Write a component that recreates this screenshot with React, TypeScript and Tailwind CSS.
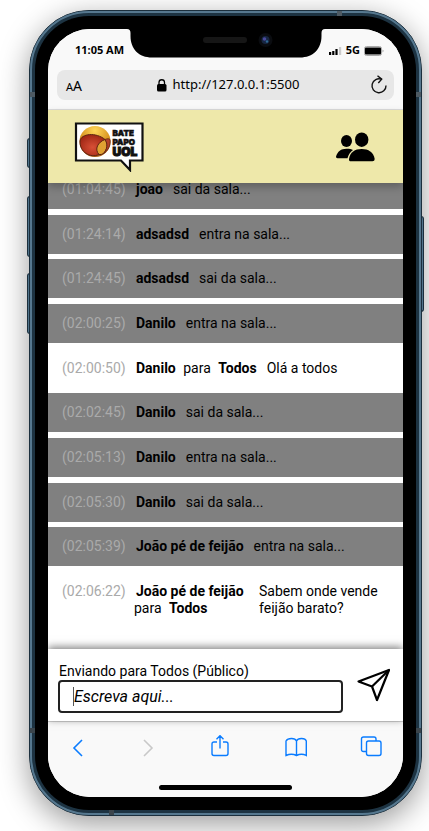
import React from "react";

type Message = { time: string; from: string; text: string; to?: string };

const messages: Message[] = [
  { time: "(01:04:45)", from: "joao", text: "sai da sala..." },
  { time: "(01:24:14)", from: "adsadsd", text: "entra na sala..." },
  { time: "(01:24:45)", from: "adsadsd", text: "sai da sala..." },
  { time: "(02:00:25)", from: "Danilo", text: "entra na sala..." },
  { time: "(02:00:50)", from: "Danilo", to: "Todos", text: "Olá a todos" },
  { time: "(02:02:45)", from: "Danilo", text: "sai da sala..." },
  { time: "(02:05:13)", from: "Danilo", text: "entra na sala..." },
  { time: "(02:05:30)", from: "Danilo", text: "sai da sala..." },
  { time: "(02:05:39)", from: "João pé de feijão", text: "entra na sala..." },
  { time: "(02:06:22)", from: "João pé de feijão", to: "Todos", text: "Sabem onde vende feijão barato?" },
];

function Notch() {
  return (
    <svg className="absolute top-0 left-1/2 -ml-[100px]" width="200" height="29" viewBox="0 0 200 29" aria-hidden="true">
      <path d="M1 0H199Q195.500 0 195.500 4V7C195.500 20 187 28.500 174 28.500H26C13 28.500 4.500 20 4.500 7V4Q4.500 0 1 0Z" fill="#000" />
      <rect x="77" y="8" width="44" height="6" rx="3" fill="#161616" />
      <circle cx="139.500" cy="11" r="7" fill="#0a0c10" />
      <circle cx="139.500" cy="11" r="4" fill="#172642" />
      <circle cx="138.500" cy="10" r="1.800" fill="#4a4a9c" />
      <circle cx="141" cy="12.500" r="1.200" fill="#2f6a94" />
    </svg>
  );
}

function StatusBar() {
  return (
    <div className="flex h-[41px] items-center justify-between pt-[2px] pr-[19px] pl-[27px] text-[11px] font-bold">
      <span>11:05 AM</span>
      <div className="flex items-center gap-1">
        <svg width="13" height="8" viewBox="0 0 13 8" aria-hidden="true">
          <path d="M0 5h2.200v3H0zM3.200 4h2.200v4H3.200zM6.400 2h2.200v6H6.400z" fill="#000" />
          <path d="M10 0h2.200v8H10z" fill="#ccc" />
        </svg>
        <span>5G</span>
        <svg width="20" height="10" viewBox="0 0 20 10" aria-hidden="true">
          <rect x="0.500" y="0.500" width="17" height="9" rx="2" fill="none" stroke="#aaa" />
          <rect x="1" y="1.500" width="16" height="7" rx="1" fill="#000" />
          <path d="M18.500 3.500v3l1-1v-1z" fill="#aaa" />
        </svg>
      </div>
    </div>
  );
}

function AddressBar() {
  return (
    <div className="mx-[9px] mb-[9px] flex h-[30px] items-center justify-between rounded-lg bg-[#e7e7e7] pr-[6px] pl-[9px]">
      <button type="button" aria-label="Tamanho do texto" className="w-5 text-left leading-none">
        <span className="text-[11px]">A</span>
        <span className="text-[14px]">A</span>
      </button>
      <div className="flex items-center gap-[6px] text-[13px]">
        <svg width="10" height="13" viewBox="0 0 10 13" aria-hidden="true">
          <rect y="5" width="9.500" height="7.500" rx="1.500" />
          <path d="M2 6V3.500a2.700 2.700 0 0 1 5.500 0V6" fill="none" stroke="#000" strokeWidth="1.300" />
        </svg>
        <span>http://127.0.0.1:5500</span>
      </div>
      <button type="button" aria-label="Recarregar">
        <svg width="18" height="20" viewBox="0 0 18 20" fill="none" stroke="#111" strokeWidth="1.400" aria-hidden="true">
          <path d="M16 10.500A7 7 0 1 1 11.500 4.200" />
          <path d="M7.500 0.800l4.200 3.400-3.400 3.800" />
        </svg>
      </button>
    </div>
  );
}

function Logo() {
  return (
    <svg width="70" height="50" viewBox="0 0 70 50" role="img" aria-label="Bate Papo UOL">
      <defs>
        <radialGradient id="ball" cx="50%" cy="15%" r="80%">
          <stop offset="0" stopColor="#ffd75a" />
          <stop offset="0.600" stopColor="#d99522" />
          <stop offset="1" stopColor="#a85d12" />
        </radialGradient>
        <radialGradient id="core" cx="50%" cy="60%" r="70%">
          <stop offset="0" stopColor="#d84f36" />
          <stop offset="1" stopColor="#96200f" />
        </radialGradient>
      </defs>
      <path d="M2 1.500H68.500V38.500H56V48L47 38.500H2Z" fill="#fff" stroke="#111" strokeWidth="2.200" />
      <circle cx="21" cy="19.500" r="15.500" fill="url(#ball)" />
      <path d="M6 19C7 11.500 22 10 31 17.500C25 21 23.500 26 25 32.500C16 36.500 5.500 30 6 19Z" fill="url(#core)" stroke="#5d2412" />
      <path d="M31 17.500C34 22 33.500 27 29.500 31.500Q27 33 25 32.500C20 27 24 20 31 17.500Z" fill="#dfa032" stroke="#5d2412" />
      <path d="M31 17.500C33 16.500 35 16.500 36 17.500C37 23 34 29 29.500 31.500C33.500 27 34 22 31 17.500Z" fill="#b4402a" stroke="#5d2412" strokeWidth="0.800" />
      <g fill="#111" stroke="#111" fontFamily="Inter, sans-serif" fontWeight="900">
        <text x="38.500" y="13.500" fontSize="8" strokeWidth="0.600">BATE</text>
        <text x="38.500" y="22.500" fontSize="8" strokeWidth="0.600">PAPO</text>
        <text x="38.500" y="34" fontSize="12" strokeWidth="1">UOL</text>
      </g>
    </svg>
  );
}

function PeopleIcon() {
  return (
    <svg width="40" height="32" viewBox="0 0 40 32" fill="#000" aria-hidden="true">
      <ellipse cx="11.500" cy="10" rx="5.500" ry="6" />
      <ellipse cx="26.700" cy="8.700" rx="6.700" ry="7.200" />
      <path d="M14 28C15 21 20 18 26.700 18S38.500 21 39.700 28Q39.700 30.300 37.500 30.300H16Q13.700 30.300 14 28Z" />
      <path d="M11.500 17.800C14.500 17.800 16.500 18.200 18 19C15 21 13.300 24 12.500 27.300H2.500Q0.800 27.300 1 25.500C2.500 20.500 6 17.800 11.500 17.800Z" />
    </svg>
  );
}

function MessageRow({ message }: { message: Message }) {
  return (
    <li
      className={`flex min-h-[39px] shrink-0 items-start px-[14px] py-[11px] text-[14px] leading-[17px] ${
        message.to ? "bg-white" : "bg-[#808080]"
      }`}
    >
      <time className="mr-[6px] w-[66px] shrink-0 text-[#aaaaaa]">{message.time}</time>
      <p className={message.to && message.text.length > 20 ? "w-[119px] shrink-0" : "shrink-0"}>
        <b className="mr-[4px] ml-[2px] whitespace-nowrap">{message.from}</b>
        {message.to && (
          <>
            {" "}
            para <b className="mx-[4px]">{message.to}</b>
          </>
        )}
      </p>
      <p className="ml-[6px]">{message.text}</p>
    </li>
  );
}

function Composer() {
  return (
    <form
      className="relative z-10 flex h-[72px] shrink-0 items-center justify-between bg-white pr-[12px] pb-[2px] pl-[10px] shadow-[0_-2px_8px_rgba(0,0,0,0.5)]"
      onSubmit={(e) => e.preventDefault()}
    >
      <div className="min-w-0 flex-1">
        <label htmlFor="mensagem" className="block pt-[8px] pl-px text-[14px] leading-[17px]">
          Enviando para Todos (Público)
        </label>
        <div className="flex h-[33px] items-center rounded-[4px] border-2 border-[#222] pl-[13px]">
          <span className="h-[19px] w-px bg-[#555]" />
          <input
            id="mensagem"
            placeholder="Escreva aqui..."
            className="w-full min-w-0 bg-transparent text-[16px] italic outline-none placeholder:text-black"
          />
        </div>
      </div>
      <button type="submit" aria-label="Enviar" className="mt-[2px] ml-[14px]">
        <svg width="34" height="34" viewBox="0 0 34 34" fill="none" stroke="#000" strokeWidth="2.200" strokeLinejoin="round" aria-hidden="true">
          <path d="M1.500 13.500L32 2L20 32L15 18.500Z" />
          <path d="M15 18.500L32 2" />
        </svg>
      </button>
    </form>
  );
}

function BrowserToolbar() {
  return (
    <nav className="h-[76px] shrink-0 border-t border-[#d2d2d2] bg-[#f9f9f9]">
      <div className="flex h-[50px] items-center justify-between px-[21px] text-[#0a7cff]">
        <button type="button" aria-label="Voltar">
          <svg width="18" height="24" viewBox="0 0 18 24" fill="none" stroke="currentColor" strokeWidth="1.600"><path d="M13 5L5 13L13 21" /></svg>
        </button>
        <button type="button" aria-label="Avançar" className="text-[#c8c8c8]">
          <svg width="18" height="24" viewBox="0 0 18 24" fill="none" stroke="currentColor" strokeWidth="1.600"><path d="M4 5L12 13L4 21" /></svg>
        </button>
        <button type="button" aria-label="Compartilhar">
          <svg width="20" height="24" viewBox="0 0 20 24" fill="none" stroke="currentColor" strokeWidth="1.400"><path d="M6 7H3Q1 7 1 9V18.500Q1 20.500 3 20.500H15Q17 20.500 17 18.500V9Q17 7 15 7H12M9 13.500V1M5.500 4.200L9 0.700L12.500 4.200" /></svg>
        </button>
        <button type="button" aria-label="Favoritos">
          <svg width="24" height="24" viewBox="0 0 24 24" fill="none" stroke="currentColor" strokeWidth="1.400"><path d="M13.500 6Q12.500 3.500 8.500 3.500Q4.500 3.500 3 6V20.500Q8.500 18 13.500 20.500Q18.500 18 23.300 20.500V6Q22.500 3.500 18.500 3.500Q14.500 3.500 13.500 6V20.500" /></svg>
        </button>
        <button type="button" aria-label="Abas">
          <svg width="22" height="24" viewBox="0 0 22 24" fill="none" stroke="currentColor" strokeWidth="1.400"><rect x="6.500" y="6" width="14.500" height="14.500" rx="2" /><path d="M6.500 16.500H3.500Q1.500 16.500 1.500 14.500V4Q1.500 2 3.500 2H14Q16 2 16 4V6" /></svg>
        </button>
      </div>
      <div className="mx-auto mt-[13px] h-[5px] w-[133px] rounded-full bg-black" />
    </nav>
  );
}

function FrameDetails() {
  return (
    <div aria-hidden="true">
      <span className="absolute top-[127px] -left-[3px] h-[30px] w-[3px] rounded-l-sm border border-[#1b2f3d] bg-[#50738a]" />
      <span className="absolute top-[185px] -left-[3px] h-[61px] w-[3px] rounded-l-sm border border-[#1b2f3d] bg-[#50738a]" />
      <span className="absolute top-[262px] -left-[3px] h-[61px] w-[3px] rounded-l-sm border border-[#1b2f3d] bg-[#50738a]" />
      <span className="absolute top-[205px] -right-[3px] h-[96px] w-[3px] rounded-r-sm border border-[#1b2f3d] bg-[#50738a]" />
      <span className="absolute top-[81px] left-0 h-[5px] w-[5px] bg-[#4e5a63]" />
      <span className="absolute top-[81px] right-0 h-[5px] w-[5px] bg-[#4e5a63]" />
      <span className="absolute bottom-[82px] left-0 h-[5px] w-[5px] bg-[#3b454c]" />
      <span className="absolute right-0 bottom-[82px] h-[5px] w-[5px] bg-[#3b454c]" />
      <span className="absolute top-0 right-[79px] h-[5px] w-[5px] bg-[#4e5a63]" />
      <span className="absolute bottom-0 left-[79px] h-[5px] w-[5px] bg-[#3b454c]" />
    </div>
  );
}

export default function App() {
  return (
    <div className="flex min-h-screen overflow-hidden bg-white pt-[10px] pr-[7px] pb-[15px] pl-[29px] font-[Roboto,sans-serif] text-black">
      <div className="relative flex flex-1 rounded-[60px] border border-[#1c303e] bg-[#1f3443] shadow-[0_8px_30px_rgba(0,0,0,0.4)]">
        <div className="flex flex-1 rounded-[59px] border-2 border-[#56788f] bg-[#1d3342] p-[3px]">
          <div className="flex flex-1 rounded-[54px] bg-black p-[13px]">
            <div className="relative flex min-w-0 flex-1 flex-col overflow-hidden rounded-[42px] bg-white">
              <div className="shrink-0 border-b border-[#dcdcdc] bg-[#f9f9f9] font-['Noto_Sans',sans-serif]">
                <StatusBar />
                <AddressBar />
              </div>
              <Notch />
              <header className="relative z-10 flex h-[73px] shrink-0 items-center justify-between bg-[#eee8aa] pr-[28px] pl-[26px] shadow-[0_4px_8px_rgba(0,0,0,0.25)]">
                <Logo />
                <button type="button" aria-label="Participantes">
                  <PeopleIcon />
                </button>
              </header>
              <ul className="-mt-[13px] flex flex-1 flex-col justify-between pb-[21px]">
                {messages.map((message) => (
                  <MessageRow key={message.time} message={message} />
                ))}
              </ul>
              <Composer />
              <BrowserToolbar />
            </div>
          </div>
        </div>
        <FrameDetails />
      </div>
    </div>
  );
}
